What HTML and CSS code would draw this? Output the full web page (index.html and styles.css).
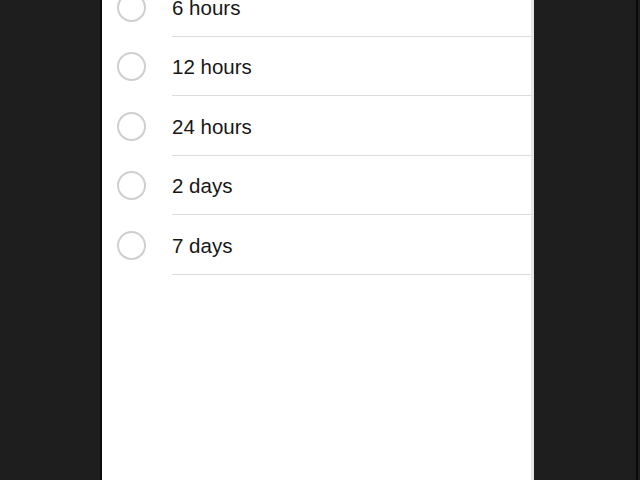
FILE: index.html
```html
<!DOCTYPE html>
<html lang="en">
<head>
	<meta charset="UTF-8">
	<title>Duration</title>
	<link rel="stylesheet" href="styles.css">
</head>
<body>
	<div class="screen">
		<div class="panel">
			<ul class="options">
				<li><span class="radio"></span><span class="label">6 hours</span></li>
				<li><span class="radio"></span><span class="label">12 hours</span></li>
				<li><span class="radio"></span><span class="label">24 hours</span></li>
				<li><span class="radio"></span><span class="label">2 days</span></li>
				<li><span class="radio"></span><span class="label">7 days</span></li>
			</ul>
		</div>
	</div>
</body>
</html>
```
FILE: styles.css
```css
html, body{
	margin: 0;
	padding: 0;
	background: #1e1e1e;
}
.screen{
	display: flex;
	width: 636px;
	height: 480px;
	border-right: 2px solid #0a0a0a;
	overflow: hidden;
}
.panel{
	margin-left: 100px;
	width: 429px;
	border-left: 2px solid #0c0c0c;
	border-right: 3px solid #e6e6e6;
	background: #fff;
	overflow: hidden;
}
.options{
	margin: -23px 0 0;
	padding: 0;
	list-style: none;
}
.options li{
	display: flex;
	align-items: center;
	height: 59.5px;
	padding-left: 15px;
}
.radio{
	width: 25px;
	height: 25px;
	margin-top: 1px;
	border: 2px solid #cfcfcf;
	border-radius: 50%;
	flex: none;
}
.label{
	flex: 1;
	align-self: stretch;
	display: flex;
	align-items: center;
	box-sizing: border-box;
	padding-top: 3px;
	margin-left: 26px;
	border-bottom: 1px solid #dcdcdc;
	font-family: "Liberation Sans", Arial, sans-serif;
	font-size: 20.5px;
	color: #171717;
}
```
